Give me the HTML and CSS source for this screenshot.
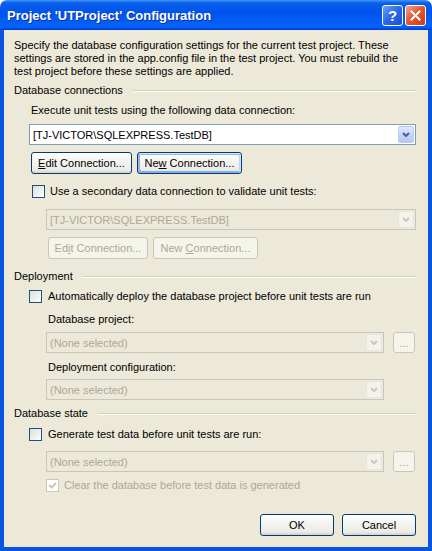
FILE: index.html
```html
<!DOCTYPE html>
<html lang="en">
<head>
  <meta charset="UTF-8" />
  <meta name="viewport" content="width=device-width, initial-scale=1.0"/>
  <title>Project 'UTProject' Configuration</title>
  <link rel="stylesheet" href="styles.css">
</head>
<body>
  <div class="window">
    <div class="titlebar">
      <span class="title">Project 'UTProject' Configuration</span>
      <span class="cap-btn help">?</span>
      <span class="cap-btn close">
        <svg width="11" height="11" viewBox="0 0 11 11"><path d="M1.5 1.5 L9.5 9.5 M9.5 1.5 L1.5 9.5" stroke="#fff" stroke-width="2" stroke-linecap="square"/></svg>
      </span>
    </div>

    <div class="client">
      <p class="intro">Specify the database configuration settings for the current test project. These<br>settings are stored in the app.config file in the test project. You must rebuild the<br>test project before these settings are applied.</p>

      <!-- database connections -->
      <div class="group-head head-conn"><span>Database connections</span><span class="rule"></span></div>
      <div class="lvl1">
        <div class="label exec-label">Execute unit tests using the following data connection:</div>
        <div class="combo combo-main">
          <span class="value">[TJ-VICTOR\SQLEXPRESS.TestDB]</span>
          <span class="drop"><svg width="8" height="5" viewBox="0 0 8 5"><path d="M1 1 L4 4 L7 1" fill="none" stroke="#4d6185" stroke-width="2"/></svg></span>
        </div>
        <div class="btn-row conn-btns">
          <button class="btn w-edit"><u>E</u>dit Connection...</button>
          <button class="btn w-new focus">Ne<u>w</u> Connection...</button>
        </div>
        <div class="check-row secondary-check">
          <span class="checkbox"></span>
          <span>Use a secondary data connection to validate unit tests:</span>
        </div>
        <div class="lvl2">
          <div class="combo disabled combo-second">
            <span class="value">[TJ-VICTOR\SQLEXPRESS.TestDB]</span>
            <span class="drop"><svg width="8" height="5" viewBox="0 0 8 5"><path d="M1 1 L4 4 L7 1" fill="none" stroke="#c9c7ba" stroke-width="2"/></svg></span>
          </div>
          <div class="btn-row second-btns">
            <button class="btn disabled w-edit2">Ed<u>i</u>t Connection...</button>
            <button class="btn disabled w-new">New <u>C</u>onnection...</button>
          </div>
        </div>
      </div>

      <!-- deployment -->
      <div class="group-head head-deploy"><span>Deployment</span><span class="rule"></span></div>
      <div class="lvl1">
        <div class="check-row deploy-check">
          <span class="checkbox"></span>
          <span>Automatically deploy the database project before unit tests are run</span>
        </div>
        <div class="lvl2">
          <div class="label sub-label project-label">Database project:</div>
          <div class="picker project-picker">
            <div class="combo disabled combo-short">
              <span class="value">(None selected)</span>
              <span class="drop"><svg width="8" height="5" viewBox="0 0 8 5"><path d="M1 1 L4 4 L7 1" fill="none" stroke="#c9c7ba" stroke-width="2"/></svg></span>
            </div>
            <button class="btn disabled dots">...</button>
          </div>
          <div class="label sub-label config-label">Deployment configuration:</div>
          <div class="picker config-picker">
            <div class="combo disabled combo-short">
              <span class="value">(None selected)</span>
              <span class="drop"><svg width="8" height="5" viewBox="0 0 8 5"><path d="M1 1 L4 4 L7 1" fill="none" stroke="#c9c7ba" stroke-width="2"/></svg></span>
            </div>
          </div>
        </div>
      </div>

      <!-- database state -->
      <div class="group-head head-state"><span>Database state</span><span class="rule"></span></div>
      <div class="lvl1">
        <div class="check-row generate-check">
          <span class="checkbox"></span>
          <span>Generate test data before unit tests are run:</span>
        </div>
        <div class="lvl2">
          <div class="picker generator-picker">
            <div class="combo disabled combo-short">
              <span class="value">(None selected)</span>
              <span class="drop"><svg width="8" height="5" viewBox="0 0 8 5"><path d="M1 1 L4 4 L7 1" fill="none" stroke="#c9c7ba" stroke-width="2"/></svg></span>
            </div>
            <button class="btn disabled dots">...</button>
          </div>
          <div class="check-row disabled clear-check">
            <span class="checkbox checked">
              <svg width="11" height="11" viewBox="0 0 11 11"><path d="M2 5 L4.5 7.5 L9 3" fill="none" stroke="#cac8bb" stroke-width="2"/></svg>
            </span>
            <span>Clear the database before test data is generated</span>
          </div>
        </div>
      </div>

      <div class="footer">
        <button class="btn w-ok">OK</button>
        <button class="btn w-ok">Cancel</button>
      </div>
    </div>
  </div>
</body>
</html>
```

FILE: styles.css
```css
* {
  box-sizing: border-box;
}

body {
  margin: 0;
  background: #fff;
  font-family: 'Liberation Sans', Arial, sans-serif;
  font-size: 11px;
  color: #000;
}

.window {
  width: 432px;
  height: 551px;
  display: flex;
  flex-direction: column;
}

/* title bar */
.titlebar {
  height: 30px;
  flex: none;
  display: flex;
  align-items: center;
  padding: 0 6px 0 7px;
  border-radius: 7px 7px 0 0;
  background: linear-gradient(#3d95ff 0%, #0a5fe8 10%, #0053ee 40%, #0461f7 85%, #005bff 93%, #003dd7 97%, #003dd7 100%);
}

.title {
  flex: 1;
  color: #fff;
  font-weight: bold;
  font-size: 13px;
  text-shadow: 1px 1px #0f2f9f;
}

.cap-btn {
  width: 21px;
  height: 21px;
  margin-left: 2px;
  border: 1px solid #fff;
  border-radius: 3px;
  display: flex;
  align-items: center;
  justify-content: center;
  color: #fff;
  font-weight: bold;
  font-size: 15px;
}

.help {
  background: linear-gradient(135deg, #6fa1f7, #2b67e6 50%, #1b50d3);
}

.close {
  background: linear-gradient(135deg, #f0a58f, #e45a35 45%, #c83c16);
}

/* client area */
.client {
  flex: 1;
  background: #ece9d8;
  border: 4px solid #0855e0;
  border-top: 0;
  padding: 9px 12px 0 10px;
}

.intro {
  margin: 0;
  line-height: 13px;
  white-space: nowrap;
}

.group-head {
  display: flex;
  align-items: center;
  gap: 10px;
  height: 13px;
  line-height: 13px;
}

.rule {
  flex: 1;
  border-top: 1px solid #d0d0bf;
  border-bottom: 1px solid #fff;
}

.head-conn { margin-top: 6px; }
.head-deploy { margin-top: 11px; }
.head-state { margin-top: 7px; }

.lvl1 {
  margin-left: 15px;
}

.lvl2 {
  margin-left: 17px;
}

.label {
  height: 13px;
  line-height: 13px;
}

.exec-label {
  margin-top: 7px;
  padding-left: 2px;
}

.sub-label {
  padding-left: 2px;
}

.project-label { margin-top: 10px; }
.config-label { margin-top: 8px; }

/* combo boxes */
.combo {
  height: 21px;
  display: flex;
  align-items: center;
  border: 1px solid #7f9db9;
  background: #fff;
}

.combo .value {
  flex: 1;
  padding-left: 3px;
  white-space: nowrap;
}

.drop {
  width: 16px;
  height: 17px;
  margin: 1px;
  display: flex;
  align-items: center;
  justify-content: center;
  border: 1px solid #bbcdf5;
  border-radius: 2px;
  background: linear-gradient(#e0e9fd, #c1d3fb 60%, #b3c8f5);
}

.combo.disabled {
  border-color: #c9c7ba;
  background: #ece9d8;
  color: #aca899;
}

.combo.disabled .drop {
  border-color: #e8e7df;
  background: #f3f2ec;
}

.combo-main { margin-top: 7px; }
.combo-second { margin-top: 11px; }

.combo-short {
  width: 338px;
}

.picker {
  display: flex;
  gap: 9px;
}

.project-picker { margin-top: 6px; }
.config-picker { margin-top: 5px; }
.generator-picker { margin-top: 10px; }

/* buttons */
.btn-row {
  display: flex;
  gap: 5px;
}

.conn-btns {
  margin-top: 7px;
  margin-left: 2px;
}

.second-btns {
  margin-top: 7px;
  margin-left: 2px;
}

.btn {
  height: 22px;
  padding: 0;
  font: inherit;
  color: #000;
  border: 1px solid #003c74;
  border-radius: 3px;
  background: linear-gradient(#fff, #f4f4f0 40%, #ecebe6 85%, #d6d0c5);
}

.btn.focus {
  box-shadow: inset -1px 1px #cee7ff, inset 1px 2px #98b8ea, inset -2px 2px #bcd4f6, inset 1px -1px #89ade4, inset 2px -2px #89ade4;
}

.btn.disabled {
  color: #aca899;
  border-color: #c9c7ba;
  background: #f5f4ea;
}

.w-edit { width: 101px; }
.w-edit2 { width: 100px; }
.w-new { width: 105px; }
.w-ok { width: 74px; }

.dots {
  width: 22px;
  height: 21px;
  line-height: 14px;
}

/* check boxes */
.check-row {
  display: flex;
  align-items: center;
  gap: 5px;
  height: 13px;
  line-height: 13px;
}

.checkbox {
  width: 13px;
  height: 13px;
  flex: none;
  display: flex;
  align-items: center;
  justify-content: center;
  border: 1px solid #1c5180;
  background: linear-gradient(135deg, #dcdcd7, #fff);
}

.check-row.disabled {
  color: #aca899;
}

.check-row.disabled .checkbox {
  border-color: #cac8bb;
  background: #fff;
}

.secondary-check {
  margin-top: 11px;
  margin-left: 3px;
}

.deploy-check,
.generate-check {
  gap: 6px;
}

.deploy-check { margin-top: 7px; }
.generate-check { margin-top: 8px; }
.clear-check { margin-top: 7px; }

/* dialog buttons */
.footer {
  display: flex;
  justify-content: flex-end;
  gap: 8px;
  margin-top: 22px;
}
```
